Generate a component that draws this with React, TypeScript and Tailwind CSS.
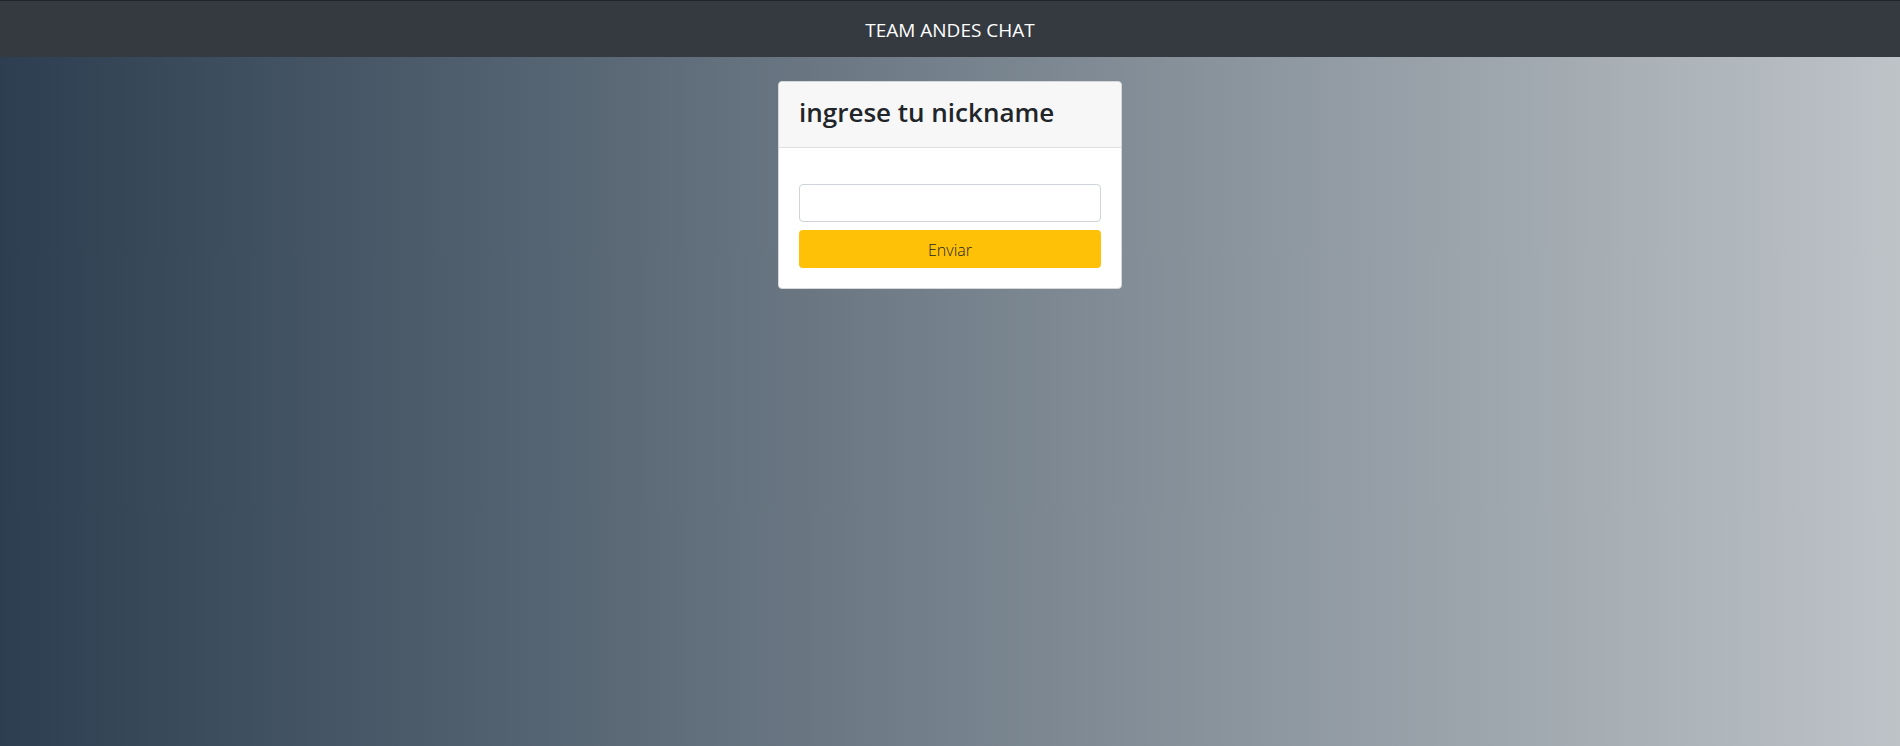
import { useState } from "react";

export default function App() {
  const [nickname, setNickname] = useState("");

  return (
    <div className="flex min-h-screen flex-col bg-linear-to-r/srgb from-[#2c3e50] to-[#bdc3c7] font-['Open_Sans','Noto_Sans',sans-serif] text-[#212529]">
      <nav className="flex h-[57px] items-center justify-center border-t border-[#212529] bg-[#343a40] px-4 pt-0.5">
        <a href="#" className="text-[19px] leading-7 text-white">
          TEAM ANDES CHAT
        </a>
      </nav>
      <main className="flex justify-center px-4 py-6">
        <section className="w-full max-w-[344px] rounded border border-[#d5d7d9] bg-white">
          <header className="rounded-t border-b border-[#dfdfdf] bg-[#f7f7f7] px-5 pt-3.5 pb-4.5">
            <h3 className="text-[26px] leading-[33px] font-semibold">ingrese tu nickname</h3>
          </header>
          <form
            className="flex flex-col gap-2 px-5 pt-9 pb-5"
            onSubmit={(event) => event.preventDefault()}
          >
            <input
              type="text"
              aria-label="ingrese tu nickname"
              value={nickname}
              onChange={(event) => setNickname(event.target.value)}
              className="h-[38px] w-full rounded border border-[#ced4da] bg-white px-3 text-base"
            />
            <button
              type="submit"
              className="h-[38px] w-full rounded bg-[#ffc107] px-3 pt-0.5 text-base font-light"
            >
              Enviar
            </button>
          </form>
        </section>
      </main>
    </div>
  );
}
